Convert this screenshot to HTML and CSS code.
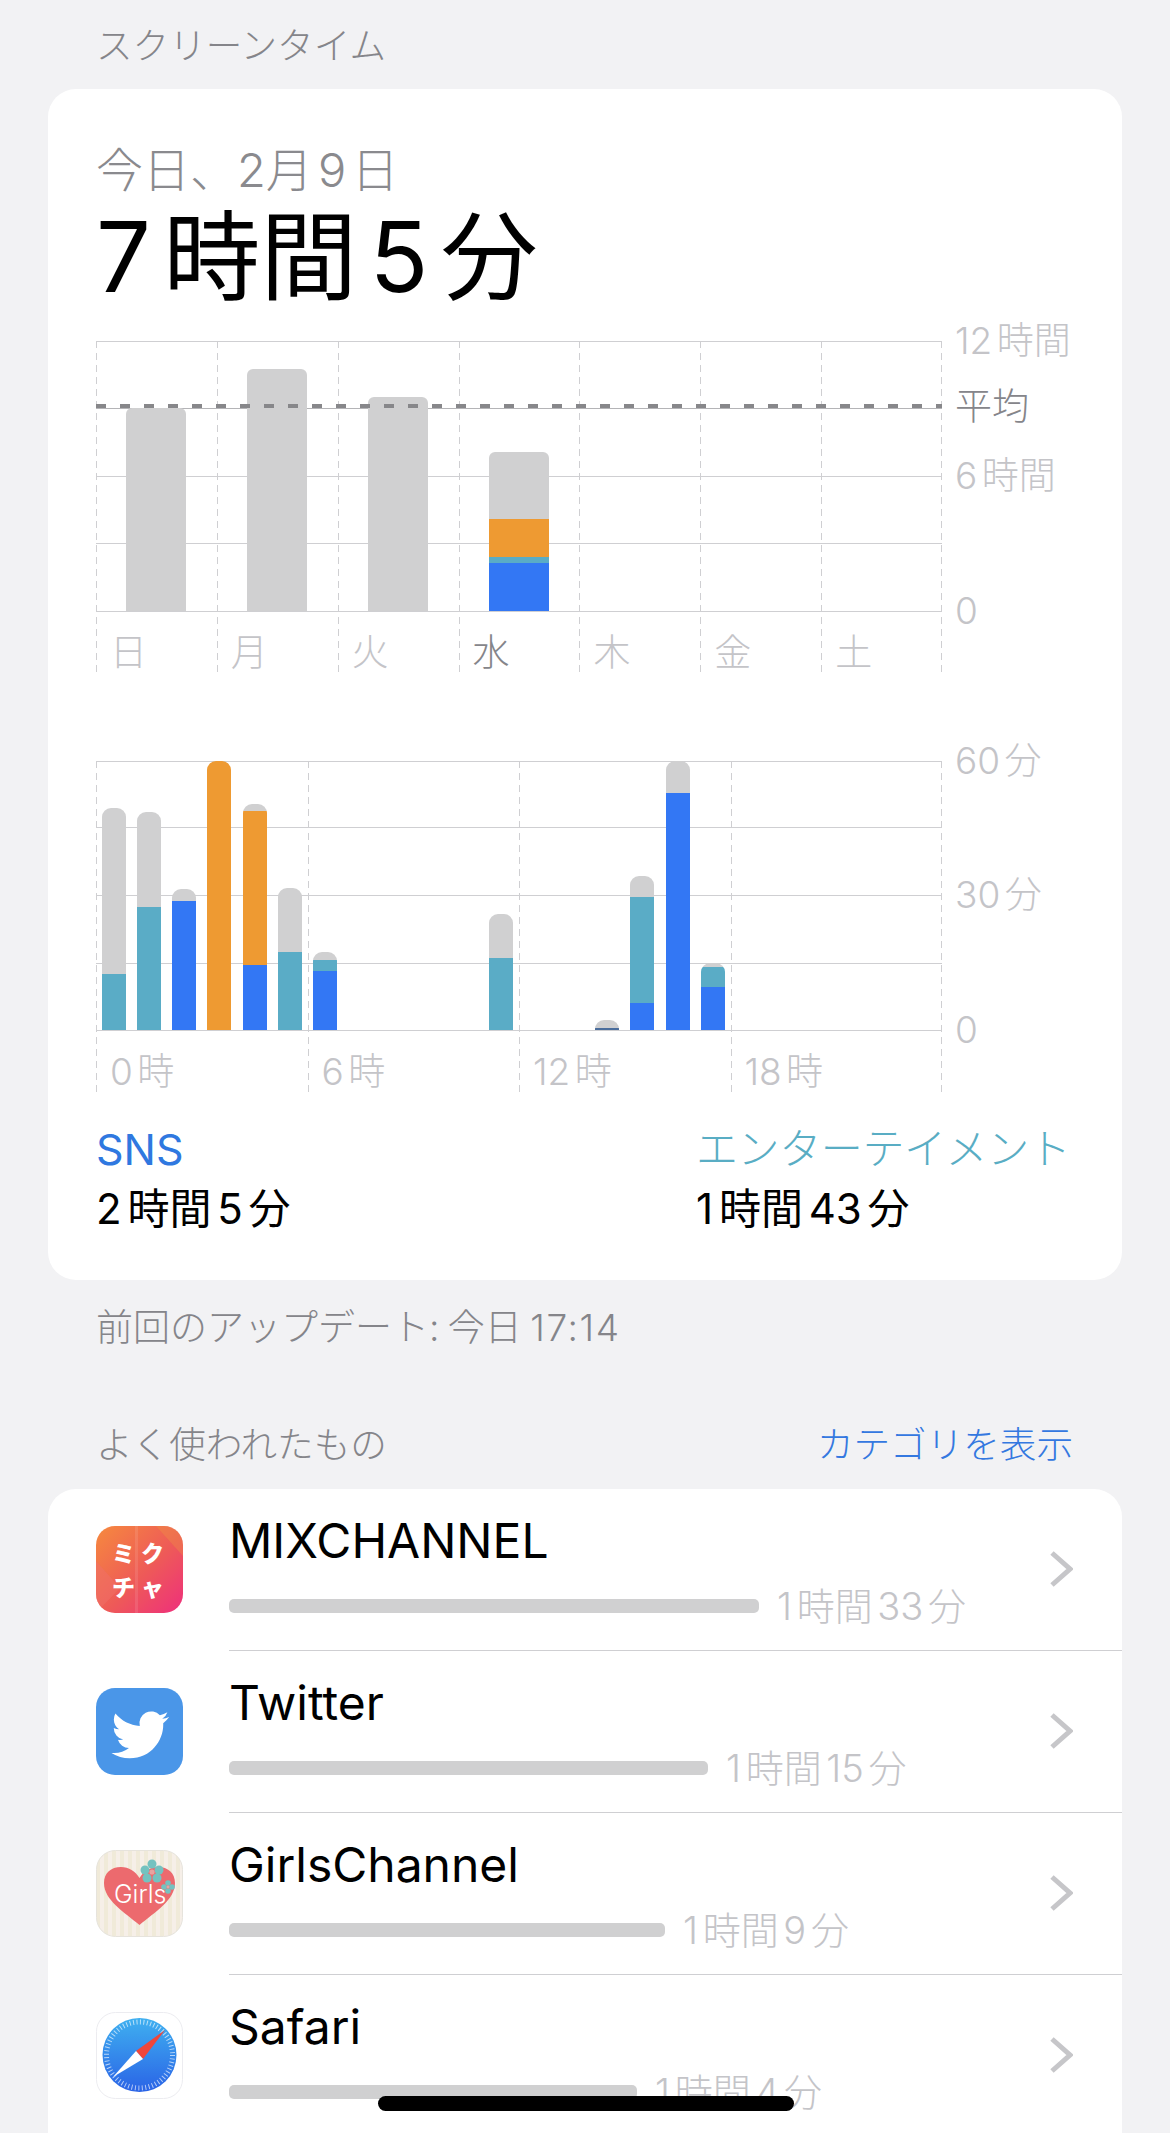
FILE: index.html
```html
<!DOCTYPE html>
<html lang="ja">
<head>
<meta charset="utf-8">
<title>スクリーンタイム</title>
<link rel="stylesheet" href="styles.css">
</head>
<body>
<main class="page">
  <h2 class="section-title first">スクリーンタイム</h2>
  <section class="card summary">
    <p class="date">今日、2月 9 日</p>
    <h1 class="total">7 時間 5 分</h1>

    <div class="chart week-chart">
      <div class="plot-area">
        <div class="columns">
          <div class="col"><div class="slots"><div class="slot"><div class="bar day"><i class="seg gray" style="height:203px"></i></div></div></div><span class="tick">日</span></div>
          <div class="col"><div class="slots"><div class="slot"><div class="bar day"><i class="seg gray" style="height:242px"></i></div></div></div><span class="tick">月</span></div>
          <div class="col"><div class="slots"><div class="slot"><div class="bar day"><i class="seg gray" style="height:214px"></i></div></div></div><span class="tick">火</span></div>
          <div class="col"><div class="slots"><div class="slot"><div class="bar day"><i class="seg gray" style="height:67px"></i><i class="seg orange" style="height:38px"></i><i class="seg teal" style="height:6px"></i><i class="seg blue" style="height:48px"></i></div></div></div><span class="tick current">水</span></div>
          <div class="col"><div class="slots"></div><span class="tick">木</span></div>
          <div class="col"><div class="slots"></div><span class="tick">金</span></div>
          <div class="col"><div class="slots"></div><span class="tick">土</span></div>
        </div>
        <div class="hline l0"></div><div class="hline l50"></div><div class="hline l75"></div><div class="hline l100"></div>
        <div class="hline lavg"></div><div class="avg-dash"></div>
      </div>
      <div class="axis">
        <span class="axis-label">12 時間</span>
        <span class="axis-label avg">平均</span>
        <span class="axis-label six">6 時間</span>
        <span class="axis-label zero">0</span>
      </div>
    </div>

    <div class="chart hour-chart">
      <div class="plot-area">
        <div class="columns four">
          <div class="col"><div class="slots">
            <div class="slot"><div class="bar hour"><i class="seg gray" style="height:166px"></i><i class="seg teal" style="height:56px"></i></div></div>
            <div class="slot"><div class="bar hour"><i class="seg gray" style="height:95px"></i><i class="seg teal" style="height:123px"></i></div></div>
            <div class="slot"><div class="bar hour"><i class="seg gray" style="height:12px"></i><i class="seg blue" style="height:129px"></i></div></div>
            <div class="slot"><div class="bar hour"><i class="seg orange" style="height:269px"></i></div></div>
            <div class="slot"><div class="bar hour"><i class="seg gray" style="height:7px"></i><i class="seg orange" style="height:154px"></i><i class="seg blue" style="height:65px"></i></div></div>
            <div class="slot"><div class="bar hour"><i class="seg gray" style="height:64px"></i><i class="seg teal" style="height:78px"></i></div></div>
          </div><span class="tick">0 時</span></div>
          <div class="col"><div class="slots">
            <div class="slot"><div class="bar hour"><i class="seg gray" style="height:8px"></i><i class="seg teal" style="height:11px"></i><i class="seg blue" style="height:59px"></i></div></div>
            <div class="slot"></div><div class="slot"></div><div class="slot"></div><div class="slot"></div>
            <div class="slot"><div class="bar hour"><i class="seg gray" style="height:44px"></i><i class="seg teal" style="height:72px"></i></div></div>
          </div><span class="tick">6 時</span></div>
          <div class="col"><div class="slots">
            <div class="slot"></div><div class="slot"></div>
            <div class="slot"><div class="bar hour"><i class="seg gray" style="height:8px"></i><i class="seg navy" style="height:2px"></i></div></div>
            <div class="slot"><div class="bar hour"><i class="seg gray" style="height:21px"></i><i class="seg teal" style="height:106px"></i><i class="seg blue" style="height:27px"></i></div></div>
            <div class="slot"><div class="bar hour"><i class="seg gray" style="height:32px"></i><i class="seg blue" style="height:237px"></i></div></div>
            <div class="slot"><div class="bar hour"><i class="seg gray" style="height:4px"></i><i class="seg teal" style="height:20px"></i><i class="seg blue" style="height:43px"></i></div></div>
          </div><span class="tick">12 時</span></div>
          <div class="col"><div class="slots"></div><span class="tick">18 時</span></div>
        </div>
        <div class="hline l0"></div><div class="hline l25"></div><div class="hline l50"></div><div class="hline l75"></div><div class="hline l100"></div>
      </div>
      <div class="axis">
        <span class="axis-label">60 分</span>
        <span class="axis-label thirty">30 分</span>
        <span class="axis-label zero-h">0</span>
      </div>
    </div>

    <div class="legend">
      <div class="legend-item">
        <div class="legend-name sns">SNS</div>
        <div class="legend-value">2 時間 5 分</div>
      </div>
      <div class="legend-item ent">
        <div class="legend-name ent-name">エンターテイメント</div>
        <div class="legend-value">1 時間 43 分</div>
      </div>
    </div>
  </section>

  <p class="updated">前回のアップデート: 今日 <span class="clock">17:14</span></p>

  <div class="section-head">
    <h2 class="section-title">よく使われたもの</h2>
    <span class="link">カテゴリを表示</span>
  </div>

  <section class="card apps">
    <div class="app-row">
      <svg class="app-icon" viewBox="0 0 87 87">
        <defs>
          <linearGradient id="mix" x1="0" y1="0" x2="1" y2="1"><stop offset="0" stop-color="#f68a3e"/><stop offset=".55" stop-color="#ee5a58"/><stop offset="1" stop-color="#ee2f7c"/></linearGradient>
          <clipPath id="mixclip"><rect width="87" height="87" rx="19"/></clipPath>
        </defs>
        <rect width="87" height="87" rx="19" fill="url(#mix)"/>
        <g clip-path="url(#mixclip)">
          <path d="M87 0 V30 L60 0Z" fill="#f0a040" opacity=".3"/>
          <path d="M0 35 L24 62 L0 87Z" fill="#f0706a" opacity=".5"/>
          <rect x="39" width="3" height="87" fill="#fff" opacity=".1"/>
        </g>
        <text class="mix-text" x="16" y="36">ミ</text><text class="mix-text" x="45" y="36">ク</text>
        <text class="mix-text" x="16" y="70">チ</text><text class="mix-text" x="45" y="70">ャ</text>
      </svg>
      <div class="app-body">
        <div class="app-info">
          <div class="app-name">MIXCHANNEL</div>
          <div class="usage"><div class="usage-bar" style="width:530px"></div><span class="usage-time">1 時間 33 分</span></div>
        </div>
        <svg class="chevron" viewBox="0 0 24 36"><path d="M3 2 L21 18 L3 34"/></svg>
      </div>
    </div>
    <div class="app-row">
      <svg class="app-icon" viewBox="0 0 87 87">
        <rect width="87" height="87" rx="19" fill="#4a96e8"/>
        <path transform="translate(15.5 18) scale(2.4)" fill="#fff" d="M23.953 4.57a10 10 0 01-2.825.775 4.958 4.958 0 002.163-2.723c-.951.555-2.005.959-3.127 1.184a4.92 4.92 0 00-8.384 4.482C7.69 8.095 4.067 6.13 1.64 3.162a4.822 4.822 0 00-.666 2.475c0 1.71.87 3.213 2.188 4.096a4.904 4.904 0 01-2.228-.616v.06a4.923 4.923 0 003.946 4.827 4.996 4.996 0 01-2.212.085 4.936 4.936 0 004.604 3.417 9.867 9.867 0 01-6.102 2.105c-.39 0-.779-.023-1.17-.067a13.995 13.995 0 007.557 2.209c9.053 0 13.998-7.496 13.998-13.985 0-.21 0-.42-.015-.63A9.935 9.935 0 0024 4.59z"/>
      </svg>
      <div class="app-body">
        <div class="app-info">
          <div class="app-name">Twitter</div>
          <div class="usage"><div class="usage-bar" style="width:479px"></div><span class="usage-time">1 時間 15 分</span></div>
        </div>
        <svg class="chevron" viewBox="0 0 24 36"><path d="M3 2 L21 18 L3 34"/></svg>
      </div>
    </div>
    <div class="app-row">
      <svg class="app-icon" viewBox="0 0 87 87">
        <defs><pattern id="stripes" width="8" height="8" patternUnits="userSpaceOnUse"><rect width="8" height="8" fill="#f6efe8"/><rect width="4" height="8" fill="#f0ead9"/></pattern></defs>
        <rect x=".5" y=".5" width="86" height="86" rx="19" fill="url(#stripes)" stroke="#e6e3dc"/>
        <path d="M43.5 75 C28 62 8 50 8 33 C8 23 15 17 25 17 C33 17 39 21 43.5 28 C48 21 54 17 62 17 C72 17 79 23 79 33 C79 50 59 62 43.5 75Z" fill="#ec6a6e"/>
        <text class="girls-text" x="18" y="53">Girls</text>
        <g fill="#74c2c0">
          <circle cx="56" cy="14" r="4.5"/><circle cx="49" cy="20" r="4.5"/><circle cx="63" cy="20" r="4.5"/><circle cx="51" cy="28" r="4.5"/><circle cx="61" cy="28" r="4.5"/>
          <circle cx="68" cy="37" r="2.8"/><circle cx="76" cy="37" r="2.8"/><circle cx="72" cy="33" r="2.8"/><circle cx="72" cy="41" r="2.8"/>
        </g>
        <circle cx="56" cy="22" r="2.6" fill="#e9a3a0"/><circle cx="72" cy="37" r="1.4" fill="#e9a3a0"/>
      </svg>
      <div class="app-body">
        <div class="app-info">
          <div class="app-name">GirlsChannel</div>
          <div class="usage"><div class="usage-bar" style="width:436px"></div><span class="usage-time">1 時間 9 分</span></div>
        </div>
        <svg class="chevron" viewBox="0 0 24 36"><path d="M3 2 L21 18 L3 34"/></svg>
      </div>
    </div>
    <div class="app-row">
      <svg class="app-icon" viewBox="0 0 87 87">
        <defs><linearGradient id="saf" x1="0" y1="0" x2="0" y2="1"><stop offset="0" stop-color="#3fb0f0"/><stop offset="1" stop-color="#2a63e6"/></linearGradient></defs>
        <rect x=".5" y=".5" width="86" height="86" rx="19" fill="#fff" stroke="#ececf0"/>
        <circle cx="43.5" cy="43" r="37" fill="url(#saf)"/>
        <circle cx="43.5" cy="43" r="33" fill="none" stroke="#fff" stroke-opacity=".65" stroke-width="5" stroke-dasharray="1 2.46"/>
        <path d="M69 18 L47 47 L40 39Z" fill="#f0463a"/>
        <path d="M17 65 L40 39 L47 47Z" fill="#fff"/>
      </svg>
      <div class="app-body">
        <div class="app-info">
          <div class="app-name">Safari</div>
          <div class="usage"><div class="usage-bar" style="width:408px"></div><span class="usage-time">1 時間 4 分</span></div>
        </div>
        <svg class="chevron" viewBox="0 0 24 36"><path d="M3 2 L21 18 L3 34"/></svg>
      </div>
    </div>
  </section>
  <div class="home-indicator"></div>
</main>
</body>
</html>
```

FILE: styles.css
```css
* { box-sizing: border-box; margin: 0; padding: 0; }
html, body { height: 2133px; overflow: hidden; }
body {
  background: #f2f2f4;
  font-family: "Inter", "Noto Sans CJK JP", sans-serif;
  font-weight: 400;
  color: #000;
}
.page { position: relative; width: 1170px; height: 2133px; overflow: hidden; padding: 26px 48px 0; }

.section-title { font-size: 36.6px; line-height: 40px; font-weight: 300; color: #85858a; }
.section-title.first { padding-left: 48px; margin-bottom: 23px; }

.card { background: #fff; border-radius: 28px; }
.summary { padding: 53px 38px 46px 48px; height: 1191px; }

.date { font-size: 47px; line-height: 56px; color: #8a8a8e; font-weight: 300; margin-bottom: 9px; word-spacing: -8px; }
.total { font-size: 97px; line-height: 100px; font-weight: 400; margin-bottom: 34px; word-spacing: -15px; }

.chart { display: flex; height: 331px; }
.hour-chart { margin-top: 89px; }
.plot-area { position: relative; width: 846px; height: 331px; }
.columns { position: relative; z-index: 1; display: grid; grid-template-columns: repeat(7, 1fr); height: 100%; }
.columns.four { grid-template-columns: repeat(4, 1fr); }
.columns::after {
  content: ""; position: absolute; top: 0; bottom: 0; right: 0; width: 1px;
  background: repeating-linear-gradient(to bottom, #cfcfd2 0 7px, transparent 7px 12px);
}
.col {
  display: flex; flex-direction: column;
  background: repeating-linear-gradient(to bottom, #cfcfd2 0 7px, transparent 7px 12px) left top / 1px 100% no-repeat;
}
.slots { display: flex; height: 270px; flex: none; }
.hour-chart .slots { height: 269px; }
.slot { flex: 1; display: flex; align-items: flex-end; justify-content: center; }
.bar { display: flex; flex-direction: column; overflow: hidden; border-radius: 6px 6px 0 0; }
.bar.day { width: 60px; }
.bar.hour { width: 24px; border-radius: 9px 9px 0 0; }
.seg { display: block; }
.gray { background: #d0d0d1; }
.orange { background: #ee9a32; }
.teal { background: #5aacc6; }
.blue { background: #3377f4; }
.navy { background: #4a6d9c; }

.tick { display: block; font-size: 37px; line-height: 44px; margin-top: 20px; padding-left: 14px; color: #c4c4c8; font-weight: 300; word-spacing: -6px; }
.tick.current { color: #85858a; }

.hline { position: absolute; left: 0; right: 0; height: 1px; background: #cfcfd2; }
.l0 { top: 0; }
.l25 { top: 66px; }
.l50 { top: 135px; }
.hour-chart .l50 { top: 134px; }
.l75 { top: 202px; }
.l100 { top: 270px; }
.hour-chart .l100 { top: 269px; }
.lavg { top: 67px; background: #b4b4b7; }
.avg-dash {
  position: absolute; z-index: 2; left: 0; right: 0; top: 63px; height: 4px;
  background: repeating-linear-gradient(to right, #87878a 0 10px, transparent 10px 24px);
}

.axis { display: flex; flex-direction: column; padding-left: 13px; margin-top: -20px; }
.axis-label { display: block; font-size: 37px; line-height: 40px; color: #c4c4c8; font-weight: 300; word-spacing: -6px; white-space: nowrap; }
.axis-label.avg { margin-top: 26px; color: #85858a; }
.axis-label.six { margin-top: 29px; }
.axis-label.zero { margin-top: 95px; }
.axis-label.thirty { margin-top: 94px; }
.axis-label.zero-h { margin-top: 95px; }

.legend { display: flex; margin-top: 32px; }
.legend-item { width: 600px; }
.legend-item.ent { width: auto; }
.legend-name { font-size: 42px; line-height: 50px; font-weight: 300; margin-bottom: 10px; white-space: nowrap; }
.sns { color: #2f78e0; font-size: 43px; font-weight: 400; }
.ent-name { color: #59adc4; letter-spacing: -.4px; }
.legend-value { font-size: 42px; line-height: 50px; word-spacing: -6px; white-space: nowrap; }

.updated { font-size: 37px; line-height: 40px; color: #85858a; font-weight: 300; padding-left: 48px; margin: 28px 0 77px; word-spacing: -2px; }
.clock { letter-spacing: 1.6px; }
.section-head { display: flex; justify-content: space-between; padding: 0 49px 0 48px; margin-bottom: 24px; }
.link { font-size: 36.6px; line-height: 40px; color: #3478e0; font-weight: 300; }

.apps { height: 760px; overflow: hidden; }
.app-row { display: flex; height: 162px; padding-left: 48px; }
.app-icon { flex: none; width: 87px; height: 87px; margin-top: 37px; }
.app-body { flex: 1; margin-left: 46px; display: flex; padding-right: 49px; border-bottom: 1px solid #cfcfd2; }
.app-info { flex: 1; padding-top: 22px; }
.app-name { font-size: 48px; line-height: 60px; }
.usage { display: flex; align-items: center; height: 50px; margin-top: 10px; gap: 18px; }
.usage-bar { height: 14px; background: #d0d0d1; border-radius: 5px; flex: none; }
.usage-time { font-size: 38px; line-height: 50px; color: #c4c4c8; font-weight: 300; word-spacing: -6px; white-space: nowrap; }
.chevron { flex: none; width: 24px; height: 36px; margin-top: 62px; fill: none; stroke: #c6c6c9; stroke-width: 5; }

.mix-text { font-size: 23px; font-weight: 900; fill: #fff; font-family: "Noto Sans CJK JP", sans-serif; }
.girls-text { font-size: 25px; fill: #fff; font-family: "Inter", sans-serif; font-weight: 300; }

.home-indicator { position: absolute; left: 378px; width: 416px; bottom: 22px; height: 15px; background: #000; border-radius: 8px; z-index: 5; }
```
